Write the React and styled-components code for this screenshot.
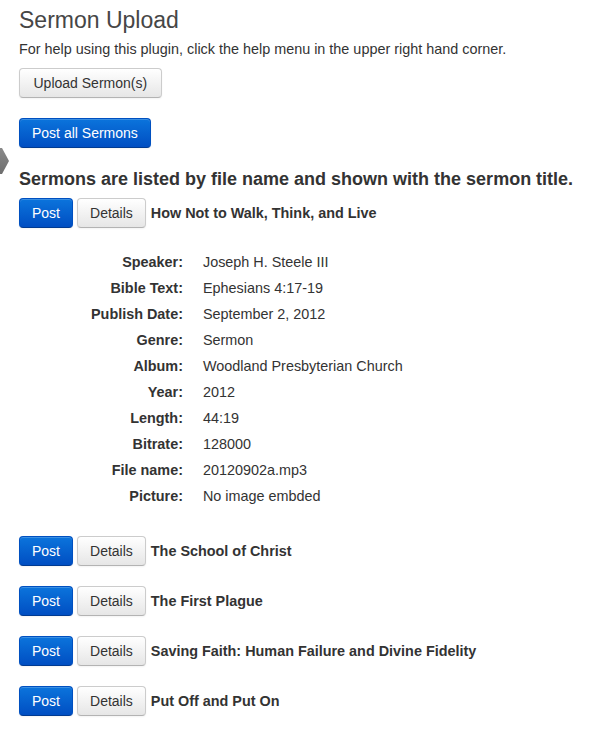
import styled, { createGlobalStyle, css } from "styled-components";

const GlobalStyle = createGlobalStyle`
  html, body {
    margin: 0;
    padding: 0;
    background: #fff;
  }
  body {
    font-family: "Liberation Sans", Arial, sans-serif;
    color: #333;
  }
`;

const sermons = [
  {
    title: "How Not to Walk, Think, and Live",
    open: true,
    details: [
      ["Speaker:", "Joseph H. Steele III"],
      ["Bible Text:", "Ephesians 4:17-19"],
      ["Publish Date:", "September 2, 2012"],
      ["Genre:", "Sermon"],
      ["Album:", "Woodland Presbyterian Church"],
      ["Year:", "2012"],
      ["Length:", "44:19"],
      ["Bitrate:", "128000"],
      ["File name:", "20120902a.mp3"],
      ["Picture:", "No image embded"],
    ],
  },
  { title: "The School of Christ" },
  { title: "The First Plague" },
  { title: "Saving Faith: Human Failure and Divine Fidelity" },
  { title: "Put Off and Put On" },
];

const App = () => {
  return (
    <>
      <GlobalStyle />
      <Page>
        <MenuArrow />
        <Title>Sermon Upload</Title>
        <Help>
          For help using this plugin, click the help menu in the upper right
          hand corner.
        </Help>
        <Button wide>Upload Sermon(s)</Button>
        <Button primary spaced>
          Post all Sermons
        </Button>
        <Heading>Sermons are listed by file name and shown with the sermon title.</Heading>

        {sermons.map((sermon) => (
          <Sermon key={sermon.title}>
            <SermonRow>
              <Button primary>Post</Button>
              <Button>Details</Button>
              <SermonTitle>{sermon.title}</SermonTitle>
            </SermonRow>
            {sermon.open && (
              <DetailTable>
                <tbody>
                  {sermon.details.map(([label, value]) => (
                    <tr key={label}>
                      <Label>{label}</Label>
                      <Value>{value}</Value>
                    </tr>
                  ))}
                </tbody>
              </DetailTable>
            )}
          </Sermon>
        ))}
      </Page>
    </>
  );
};

export default App;

const Page = styled.div`
  position: relative;
  padding: 6px 19px 20px;
  display: flex;
  flex-direction: column;
  align-items: flex-start;
`;

/* the admin menu's current-item pointer, poking in from the left edge */
const MenuArrow = styled.div`
  position: absolute;
  left: 0;
  top: 148px;
  width: 9px;
  height: 26px;
  background: linear-gradient(#8a8a8a, #6e6e6e);
  clip-path: polygon(0 0, 2px 0, 9px 13px, 2px 26px, 0 26px);
`;

const Title = styled.h2`
  margin: 0;
  font-family: "Liberation Sans", Arial, sans-serif;
  font-weight: 400;
  font-size: 23px;
  line-height: 29px;
  color: #464646;
`;

const Help = styled.p`
  margin: 4px 0 9px;
  font-size: 14.4px;
  line-height: 20px;
  color: #333;
`;

const Button = styled.button(
  (props) => css`
    font-family: "Liberation Sans", Arial, sans-serif;
    font-size: 14px;
    line-height: 20px;
    height: 30px;
    padding: 0 ${props.wide ? "13.5px" : "12px"};
    margin-top: ${props.spaced ? "20px" : "0"};
    border-radius: 4px;
    cursor: pointer;
    color: #333;
    background: linear-gradient(#ffffff, #e6e6e6);
    border: 1px solid #cccccc;
    border-bottom-color: #b3b3b3;
    box-shadow: inset 0 1px 0 rgba(255, 255, 255, 0.2),
      0 1px 2px rgba(0, 0, 0, 0.05);
    ${props.primary &&
    css`
      color: #fff;
      background: linear-gradient(#0b74dc, #004ec2);
      border-color: #0050c0 #0050c0 #003a91;
    `}
  `
);

const Heading = styled.h3`
  margin: 20px 0 8px;
  font-size: 18px;
  line-height: 22px;
  font-weight: 700;
  color: #333;
`;

const Sermon = styled.div`
  display: flex;
  flex-direction: column;
  & + & {
    margin-top: 20px;
  }
`;

const SermonRow = styled.div`
  display: flex;
  align-items: center;
  gap: 4px;
`;

const SermonTitle = styled.span`
  margin-left: 1px;
  font-size: 14.4px;
  line-height: 20px;
  font-weight: 700;
  color: #333;
`;

const DetailTable = styled.table`
  margin: 21px 0 7px 72px;
  border-collapse: collapse;
`;

const Label = styled.th`
  text-align: right;
  font-size: 14.4px;
  font-weight: 700;
  line-height: 20px;
  padding: 3px 10px 3px 0;
  color: #333;
`;

const Value = styled.td`
  font-size: 14.4px;
  line-height: 20px;
  padding: 3px 10px;
  color: #333;
`;
